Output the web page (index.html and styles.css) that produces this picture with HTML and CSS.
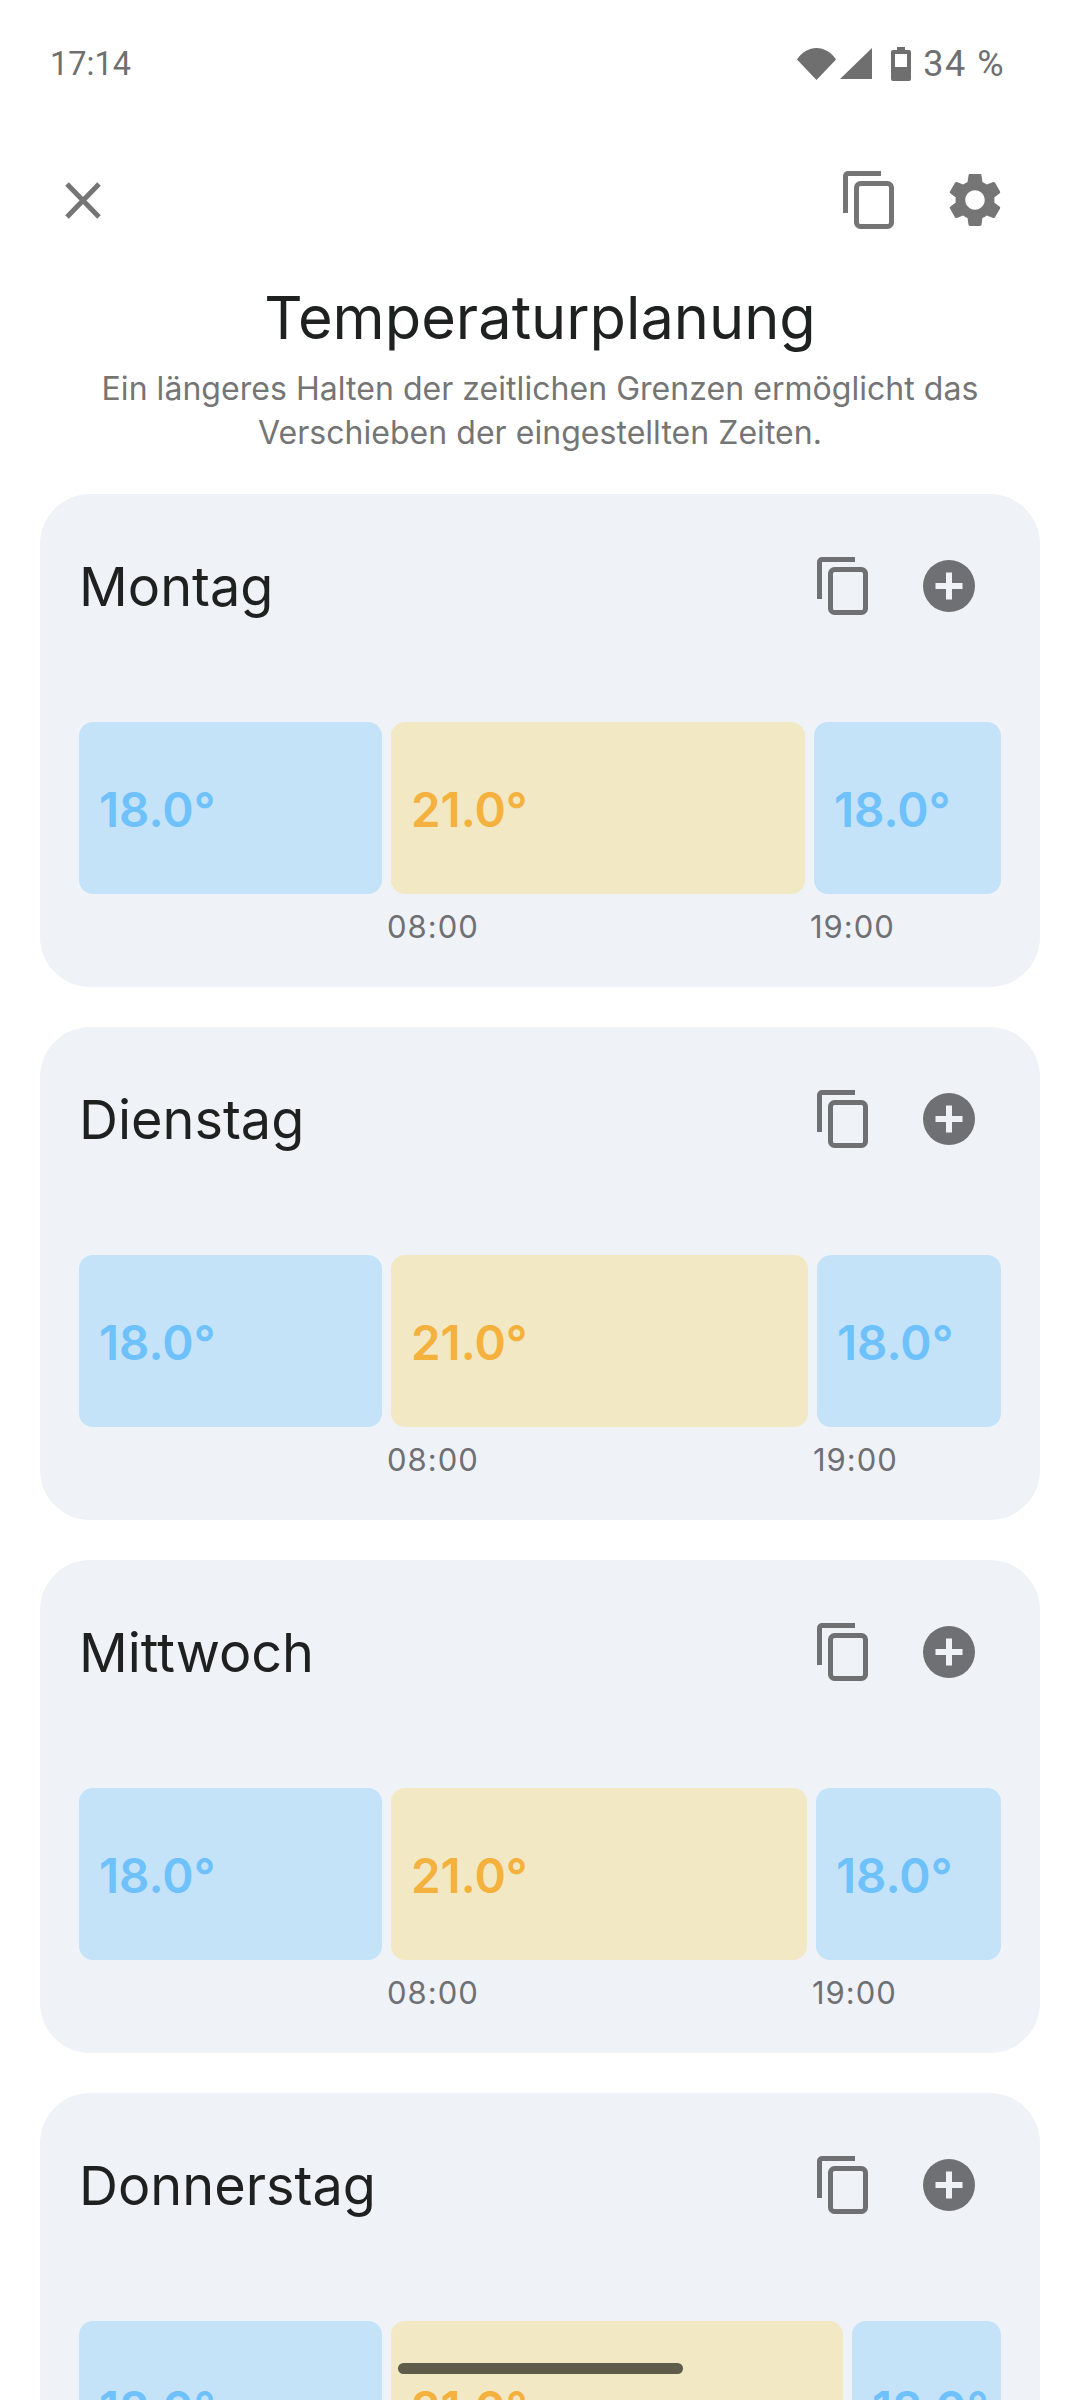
FILE: index.html
```html
<!DOCTYPE html>
<html lang="de">
<head>
  <meta charset="UTF-8">
  <title>Temperaturplanung</title>
  <meta name="viewport" content="width=device-width, initial-scale=1">
  <link rel="stylesheet" href="styles.css">
</head>
<body>

<svg class="defs" width="0" height="0">
  <symbol id="copy" viewBox="0 0 51 58">
    <path d="M2.500 42V5a2.500 2.500 0 0 1 2.500-2.500H38" fill="none" stroke="currentColor" stroke-width="5"/>
    <rect x="13.500" y="12.500" width="35" height="43" rx="4" fill="none" stroke="currentColor" stroke-width="5"/>
  </symbol>
</svg>

<div class="status">
  <span class="clock">17:14</span>
  <div class="status-right">
    <svg class="ic-wifi" viewBox="0 0 39 32"><path d="M0 11.500C5 4 12 0 19.500 0S34 4 39 11.500L19.500 32z" fill="currentColor"/></svg>
    <svg class="ic-signal" viewBox="0 0 32 31"><path d="M32 0v31H0z" fill="currentColor"/></svg>
    <svg class="ic-battery" viewBox="0 0 20 34">
      <path d="M6 0h8v3h4a2 2 0 0 1 2 2v27a2 2 0 0 1-2 2H2a2 2 0 0 1-2-2V5a2 2 0 0 1 2-2h4zM4 7v13h12V7z" fill="currentColor"/>
    </svg>
    <span class="percent">34 %</span>
  </div>
</div>

<div class="toolbar">
  <svg class="ic-close" viewBox="0 0 36 37"><path d="M2 2l32 33M34 2L2 35" fill="none" stroke="currentColor" stroke-width="5"/></svg>
  <div class="toolbar-right">
    <svg class="ic-copy"><use href="#copy"/></svg>
    <svg class="ic-gear" viewBox="2.600 2 18.800 20"><path fill="currentColor" d="M19.140 12.940c.04-.3.06-.61.06-.94 0-.32-.02-.64-.07-.94l2.030-1.580c.18-.14.23-.41.12-.61l-1.920-3.320c-.12-.22-.37-.29-.59-.22l-2.390.96c-.5-.38-1.030-.7-1.620-.94l-.36-2.540c-.04-.24-.24-.41-.48-.41h-3.840c-.24 0-.43.17-.47.41l-.36 2.540c-.59.24-1.130.57-1.620.94l-2.390-.96c-.22-.08-.47 0-.59.22L2.740 8.870c-.12.21-.08.47.12.61l2.030 1.580c-.05.3-.09.63-.09.94s.02.64.07.94l-2.030 1.580c-.18.14-.23.41-.12.61l1.920 3.320c.12.22.37.29.59.22l2.390-.96c.5.38 1.030.7 1.620.94l.36 2.540c.05.24.24.41.48.41h3.840c.24 0 .44-.17.47-.41l.36-2.540c.59-.24 1.130-.56 1.620-.94l2.390.96c.22.08.47 0 .59-.22l1.920-3.320c.12-.22.07-.47-.12-.61l-2.010-1.580zM12 15.600c-1.980 0-3.600-1.620-3.600-3.600s1.620-3.600 3.600-3.600 3.600 1.620 3.600 3.600-1.620 3.600-3.600 3.600z"/></svg>
  </div>
</div>

<header class="intro">
  <h1>Temperaturplanung</h1>
  <p>Ein längeres Halten der zeitlichen Grenzen ermöglicht das<br>Verschieben der eingestellten Zeiten.</p>
</header>

<main class="days">

  <section class="day">
    <div class="day-head">
      <h2>Montag</h2>
      <svg class="ic-copy"><use href="#copy"/></svg>
      <svg class="ic-add" viewBox="0 0 52 52"><circle cx="26" cy="26" r="26" fill="currentColor"/><path d="M12.500 26h27M26 12.500v27" stroke="#eff3f8" stroke-width="6"/></svg>
    </div>
    <div class="bars">
      <div class="seg cold" style="width:303px"><div class="block">18.0°</div></div>
      <div class="seg warm" style="width:414px"><div class="block">21.0°</div><span class="time">08:00</span></div>
      <div class="seg cold" style="width:187px"><div class="block">18.0°</div><span class="time">19:00</span></div>
    </div>
  </section>

  <section class="day">
    <div class="day-head">
      <h2>Dienstag</h2>
      <svg class="ic-copy"><use href="#copy"/></svg>
      <svg class="ic-add" viewBox="0 0 52 52"><circle cx="26" cy="26" r="26" fill="currentColor"/><path d="M12.500 26h27M26 12.500v27" stroke="#eff3f8" stroke-width="6"/></svg>
    </div>
    <div class="bars">
      <div class="seg cold" style="width:303px"><div class="block">18.0°</div></div>
      <div class="seg warm" style="width:417px"><div class="block">21.0°</div><span class="time">08:00</span></div>
      <div class="seg cold" style="width:184px"><div class="block">18.0°</div><span class="time">19:00</span></div>
    </div>
  </section>

  <section class="day">
    <div class="day-head">
      <h2>Mittwoch</h2>
      <svg class="ic-copy"><use href="#copy"/></svg>
      <svg class="ic-add" viewBox="0 0 52 52"><circle cx="26" cy="26" r="26" fill="currentColor"/><path d="M12.500 26h27M26 12.500v27" stroke="#eff3f8" stroke-width="6"/></svg>
    </div>
    <div class="bars">
      <div class="seg cold" style="width:303px"><div class="block">18.0°</div></div>
      <div class="seg warm" style="width:416px"><div class="block">21.0°</div><span class="time">08:00</span></div>
      <div class="seg cold" style="width:185px"><div class="block">18.0°</div><span class="time">19:00</span></div>
    </div>
  </section>

  <section class="day">
    <div class="day-head">
      <h2>Donnerstag</h2>
      <svg class="ic-copy"><use href="#copy"/></svg>
      <svg class="ic-add" viewBox="0 0 52 52"><circle cx="26" cy="26" r="26" fill="currentColor"/><path d="M12.500 26h27M26 12.500v27" stroke="#eff3f8" stroke-width="6"/></svg>
    </div>
    <div class="bars">
      <div class="seg cold" style="width:303px"><div class="block">18.0°</div></div>
      <div class="seg warm" style="width:452px"><div class="block">21.0°</div><span class="time">08:00</span></div>
      <div class="seg cold" style="width:149px"><div class="block">18.0°</div><span class="time">19:00</span></div>
    </div>
  </section>

</main>

<div class="nav-pill"></div>

</body>
</html>
```

FILE: styles.css
```css
html, body {
  height: 2400px;
  overflow: hidden;
}

body {
  font-family: 'Inter', sans-serif;
  margin: 0;
  background: #ffffff;
  color: #1f2020;
}

.defs {
  position: absolute;
}

/* status bar */
.status {
  height: 47px;
  padding: 40px 75px 0 50px;
  display: flex;
  justify-content: space-between;
  align-items: center;
  color: #6f6f6f;
  font-family: 'Roboto', sans-serif;
  font-size: 33px;
}

.clock {
  font-size: 32.500px;
}

.status-right {
  display: flex;
  align-items: center;
}

.ic-wifi {
  width: 39px;
  height: 32px;
}

.ic-signal {
  width: 32px;
  height: 31px;
  margin-left: 4px;
}

.ic-battery {
  width: 20px;
  height: 34px;
  margin-left: 19px;
}

.percent {
  margin-left: 12px;
  font-size: 36px;
  letter-spacing: 1.500px;
}

/* toolbar */
.toolbar {
  height: 58px;
  margin-top: 84px;
  padding: 0 79px 0 65px;
  display: flex;
  justify-content: space-between;
  align-items: center;
  color: #757575;
}

.toolbar-right {
  display: flex;
  align-items: center;
  gap: 55px;
}

.ic-close {
  width: 36px;
  height: 37px;
}

.ic-copy {
  width: 51px;
  height: 58px;
}

.ic-gear {
  width: 52px;
  height: 54px;
}

/* heading */
.intro {
  margin-top: 52px;
  text-align: center;
}

h1 {
  margin: 0;
  font-size: 59.500px;
  font-weight: 400;
  line-height: 72px;
}

.intro p {
  margin: 14px 0 0;
  font-size: 32px;
  line-height: 44px;
  letter-spacing: 0.040px;
  color: #757575;
}

/* day cards */
.days {
  margin: 39px 40px 0;
  display: flex;
  flex-direction: column;
  gap: 40px;
}

.day {
  height: 493px;
  flex-shrink: 0;
  box-sizing: border-box;
  padding: 63px 39px 0;
  background: #eff3f8;
  border-radius: 50px;
}

.day-head {
  height: 58px;
  display: flex;
  align-items: center;
  color: #6f7073;
}

h2 {
  flex: 1;
  margin: 0;
  padding-top: 2px;
  font-size: 54px;
  font-weight: 400;
  line-height: 58px;
  color: #1f2020;
}

.ic-add {
  width: 52px;
  height: 52px;
  margin: 0 26px 0 55px;
}

.bars {
  margin-top: 107px;
  display: flex;
  gap: 9px;
}

.seg {
  flex-shrink: 0;
}

.block {
  height: 172px;
  box-sizing: border-box;
  padding: 2px 0 0 20px;
  display: flex;
  align-items: center;
  border-radius: 14px;
  font-size: 47.500px;
  font-weight: 600;
}

.cold .block {
  background: #c4e3f9;
  color: #6fc1fb;
}

.warm .block {
  background: #f2e8c4;
  color: #f4b13e;
}

.time {
  display: block;
  margin: 15px 0 0 -4px;
  font-size: 31px;
  line-height: 36px;
  color: #6f7073;
  letter-spacing: 1px;
}

/* gesture bar */
.nav-pill {
  position: absolute;
  left: 398px;
  top: 2363px;
  width: 285px;
  height: 11px;
  border-radius: 6px;
  background: #5f5c4b;
}
```
